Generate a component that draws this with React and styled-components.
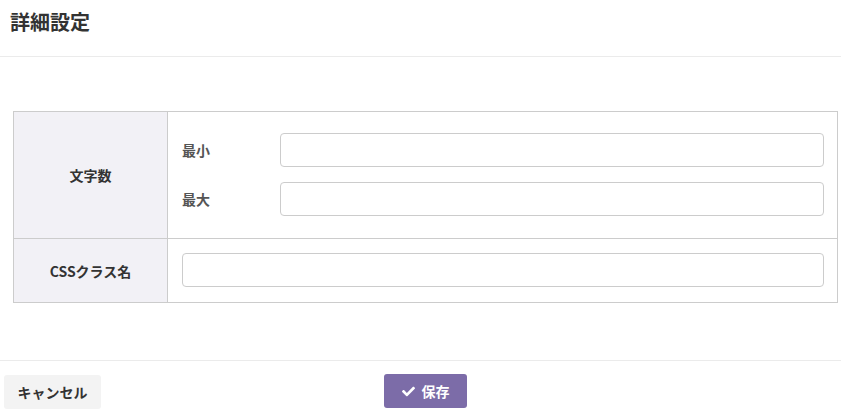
import React from "react";
import styled, { createGlobalStyle } from "styled-components";
import { FaCheck } from "react-icons/fa";

const GlobalStyle = createGlobalStyle`
  body {
    margin: 0;
    background: #fff;
    font-family: "Noto Sans CJK JP", "Noto Sans", sans-serif;
    color: #333;
  }
`;

const Header = styled.header`
  height: 46px;
  padding: 10px 10px 0;
  border-bottom: 1px solid #ebebeb;
`;

const Title = styled.h1`
  margin: 0;
  font-size: 20px;
  line-height: 24px;
  font-weight: 700;
  color: #333;
`;

const Body = styled.main`
  padding: 54px 3px 57px 13px;
`;

const Table = styled.table`
  width: 100%;
  border-collapse: collapse;
  font-size: 14px;
`;

const Th = styled.th`
  width: 154px;
  background: #f2f1f6;
  border: 1px solid #cccccc;
  font-weight: 700;
  color: #333;
  height: ${(p) => p.$h}px;
  padding: 0;
  box-sizing: border-box;
`;

const Td = styled.td`
  border: 1px solid #cccccc;
  padding: ${(p) => p.$pad};
`;

const SubGrid = styled.div`
  display: grid;
  grid-template-columns: 98px 1fr;
  row-gap: 15px;
  align-items: center;
`;

const SubLabel = styled.label`
  font-weight: 700;
  color: #555;
  font-size: 14px;
`;

const Input = styled.input`
  display: block;
  width: 100%;
  height: 34px;
  box-sizing: border-box;
  border: 1px solid #cccccc;
  border-radius: 4px;
  padding: 6px 10px;
  font-family: inherit;
  font-size: 14px;
  outline: none;
`;

const Footer = styled.footer`
  border-top: 1px solid #ebebeb;
  display: flex;
  align-items: flex-start;
  padding: 13px 4px;
`;

const Button = styled.button`
  height: 34px;
  border: none;
  border-radius: 3px;
  font-family: inherit;
  font-size: 14px;
  font-weight: 700;
  display: inline-flex;
  align-items: center;
  justify-content: center;
  gap: 7px;
  cursor: pointer;
  background: ${(p) => (p.$primary ? "#7c6ca8" : "#f3f3f3")};
  color: ${(p) => (p.$primary ? "#fff" : "#333")};
  width: ${(p) => p.$w}px;
  margin-left: ${(p) => p.$ml || 0}px;
  margin-top: ${(p) => p.$mt || 0}px;
`;

export default function App() {
  return (
    <>
      <GlobalStyle />
      <Header>
        <Title>詳細設定</Title>
      </Header>
      <Body>
        <Table>
          <tbody>
            <tr>
              <Th $h={127}>文字数</Th>
              <Td $pad="20px 13px 22px 14px">
                <SubGrid>
                  <SubLabel>最小</SubLabel>
                  <Input />
                  <SubLabel>最大</SubLabel>
                  <Input />
                </SubGrid>
              </Td>
            </tr>
            <tr>
              <Th $h={64}>CSSクラス名</Th>
              <Td $pad="13px 13px 15px 14px">
                <Input />
              </Td>
            </tr>
          </tbody>
        </Table>
      </Body>
      <Footer>
        <Button $w={97} $mt={1}>キャンセル</Button>
        <Button $primary $w={83} $ml={283}>
          <FaCheck size={13} />
          保存
        </Button>
      </Footer>
    </>
  );
}
